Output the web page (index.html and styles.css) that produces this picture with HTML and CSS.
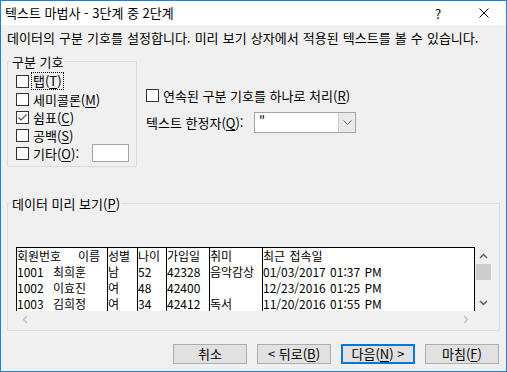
FILE: index.html
```html
<!DOCTYPE html>
<html lang="ko">
  <head>
    <meta charset="utf-8">
    <title>텍스트 마법사</title>
    <link rel="stylesheet" href="styles.css">
  </head>
  <body>
    <div class="window">
      <div class="titlebar">
        <span class="title">텍스트 마법사 - 3단계 중 2단계</span>
        <span class="tb-btn">?</span>
        <span class="tb-btn close">
          <svg width="10" height="10" viewBox="0 0 10 10"><path d="M0.5 0.5 L9.5 9.5 M9.5 0.5 L0.5 9.5" stroke="#000" stroke-width="1" fill="none"/></svg>
        </span>
      </div>

      <div class="content">
        <p class="intro">데이터의 구분 기호를 설정합니다. 미리 보기 상자에서 적용된 텍스트를 볼 수 있습니다.</p>

        <div class="options">
          <fieldset class="group delims">
            <legend>구분 기호</legend>
            <div class="delims-body">
              <div class="check"><span class="box"></span><span class="focus">탭(<u>T</u>)</span></div>
              <div class="check"><span class="box"></span><span>세미콜론(<u>M</u>)</span></div>
              <div class="check">
                <span class="box">
                  <svg width="11" height="11" viewBox="0 0 11 11"><path d="M1.5 5.5 L4 8 L9.5 2.5" fill="none" stroke="#555" stroke-width="1.2"/></svg>
                </span>
                <span>쉼표(<u>C</u>)</span>
              </div>
              <div class="check"><span class="box"></span><span>공백(<u>S</u>)</span></div>
              <div class="check"><span class="box"></span><span>기타(<u>O</u>):</span><span class="other-input"></span></div>
            </div>
          </fieldset>

          <div class="side">
            <div class="check"><span class="box"></span><span>연속된 구분 기호를 하나로 처리(<u>R</u>)</span></div>
            <div class="qualifier">
              <span class="qualifier-label">텍스트 한정자(<u>Q</u>):</span>
              <div class="combo">
                <span class="combo-value">"</span>
                <span class="combo-btn">
                  <svg width="9" height="5" viewBox="0 0 9 5"><path d="M0.5 0.5 L4.5 4.5 L8.5 0.5" fill="none" stroke="#606060" stroke-width="1"/></svg>
                </span>
              </div>
            </div>
          </div>
        </div>

        <fieldset class="group preview">
          <legend>데이터 미리 보기(<u>P</u>)</legend>
          <div class="preview-body">
            <div class="list">
              <div class="grid">
                <div class="col c1">
                  <div><span class="head-key">회원번호</span>이름</div>
                  <div><span class="key">1001</span>최희훈</div>
                  <div><span class="key">1002</span>이효진</div>
                  <div><span class="key">1003</span>김희정</div>
                </div>
                <div class="col c2">
                  <div>성별</div><div>남</div><div>여</div><div>여</div>
                </div>
                <div class="col c3">
                  <div>나이</div><div>52</div><div>48</div><div>34</div>
                </div>
                <div class="col c4">
                  <div>가입일</div><div>42328</div><div>42400</div><div>42412</div>
                </div>
                <div class="col c5">
                  <div>취미</div><div>음악감상</div><div>&nbsp;</div><div>독서</div>
                </div>
                <div class="col c6">
                  <div>최근 접속일</div>
                  <div>01/03/2017 01:37 PM</div>
                  <div>12/23/2016 01:25 PM</div>
                  <div>11/20/2016 01:55 PM</div>
                </div>
              </div>
              <div class="vscroll">
                <span class="sb-btn">
                  <svg width="9" height="6" viewBox="0 0 9 6"><path d="M1 5 L4.5 1.5 L8 5" fill="none" stroke="#606060" stroke-width="1.5"/></svg>
                </span>
                <div class="sb-track"><div class="sb-thumb"></div></div>
                <span class="sb-btn">
                  <svg width="9" height="6" viewBox="0 0 9 6"><path d="M1 1 L4.5 4.5 L8 1" fill="none" stroke="#606060" stroke-width="1.5"/></svg>
                </span>
              </div>
            </div>
            <div class="hscroll">
              <span class="sb-btn">
                <svg width="6" height="9" viewBox="0 0 6 9"><path d="M5 1 L1.5 4.5 L5 8" fill="none" stroke="#c2c2c2" stroke-width="1.5"/></svg>
              </span>
              <span class="sb-btn">
                <svg width="6" height="9" viewBox="0 0 6 9"><path d="M1 1 L4.5 4.5 L1 8" fill="none" stroke="#c2c2c2" stroke-width="1.5"/></svg>
              </span>
            </div>
          </div>
        </fieldset>

        <div class="buttons">
          <button class="btn">취소</button>
          <button class="btn">&lt; 뒤로(<u>B</u>)</button>
          <button class="btn default">다음(<u>N</u>) &gt;</button>
          <button class="btn">마침(<u>F</u>)</button>
        </div>
      </div>
    </div>
  </body>
</html>
```

FILE: styles.css
```css
* {
  box-sizing: border-box;
}

body {
  margin: 0;
  font-family: "Noto Sans CJK KR", "Noto Sans", sans-serif;
  font-size: 13px;
  color: #000;
  background-color: #f0f0f0;
}

u {
  text-decoration-thickness: 1px;
  text-underline-offset: 2px;
}

.window {
  width: 507px;
  height: 372px;
  border: 1px solid #1883d7;
  background-color: #f0f0f0;
  overflow: hidden;
}

/* title bar */
.titlebar {
  display: flex;
  align-items: center;
  height: 24px;
  background-color: #fff;
}

.title {
  flex: 1;
  padding-left: 4px;
  line-height: 24px;
  white-space: nowrap;
}

.tb-btn {
  width: 46px;
  height: 24px;
  display: flex;
  align-items: center;
  justify-content: center;
  font-size: 13px;
}

.tb-btn.close {
  width: 45px;
}

.content {
  padding: 0 6px;
}

.intro {
  margin: 5px 0 0;
  line-height: 16px;
  word-spacing: 0.5px;
  white-space: nowrap;
}

/* group boxes */
.group {
  margin: 0;
  padding: 0;
  border: 1px solid #dcdcdc;
  min-width: 0;
}

.group legend {
  margin-left: 3px;
  padding: 0 1px;
  line-height: 15px;
}

.options {
  display: flex;
  margin-top: 8px;
}

.delims {
  width: 130px;
  flex: none;
}

.delims-body {
  padding: 3px 7px 4px 8px;
}

.check {
  display: flex;
  align-items: center;
  gap: 4px;
  height: 18px;
  white-space: nowrap;
}

.box {
  width: 13px;
  height: 13px;
  flex: none;
  display: flex;
  border: 1px solid #333;
  background-color: #fff;
}

.focus {
  margin-left: -1px;
  padding: 0 1px;
  line-height: 16px;
  outline: 1px dotted #000;
}

.other-input {
  margin-left: auto;
  width: 37px;
  height: 18px;
  border: 1px solid #a5a5a5;
  background-color: #fff;
}

.side {
  margin-left: 9px;
  padding-top: 32px;
}

.qualifier {
  display: flex;
  align-items: center;
  margin-top: 8px;
}

.qualifier-label {
  width: 108px;
  white-space: nowrap;
}

.combo {
  display: flex;
  width: 102px;
  height: 21px;
  border: 1px solid #a5a5a5;
  background-color: #fff;
}

.combo-value {
  flex: 1;
  padding-left: 4px;
  line-height: 17px;
}

.combo-btn {
  width: 17px;
  display: flex;
  align-items: center;
  justify-content: center;
  border-left: 1px solid #cfcfcf;
  background-color: #e9e9e9;
}

/* preview */
.preview {
  margin-top: 29px;
}

.preview-body {
  padding: 36px 7px 2px 8px;
}

.list {
  display: flex;
  height: 64px;
  font-size: 12px;
}

.grid {
  flex: 1;
  display: flex;
  overflow: hidden;
  border: 1px solid #000;
  border-bottom: 0;
  background-color: #fff;
}

.col {
  flex: none;
  line-height: 16px;
  white-space: nowrap;
  overflow: hidden;
  border-left: 1px solid #000;
}

.c1 {
  width: 90px;
  border-left: 0;
}

.c2 { width: 30px; }
.c3 { width: 29px; }
.c4 { width: 43px; }
.c5 { width: 53px; }
.c6 { flex: 1; word-spacing: 1px; }

.head-key {
  display: inline-block;
  width: 61px;
}

.key {
  display: inline-block;
  width: 36px;
}

.vscroll {
  width: 17px;
  display: flex;
  flex-direction: column;
}

.sb-btn {
  width: 17px;
  height: 17px;
  flex: none;
  display: flex;
  align-items: center;
  justify-content: center;
}

.sb-track {
  flex: 1;
  padding: 0 1px;
}

.sb-thumb {
  height: 16px;
  background-color: #cdcdcd;
}

.hscroll {
  display: flex;
  justify-content: space-between;
  width: 458px;
  height: 17px;
}

/* buttons */
.buttons {
  display: flex;
  justify-content: flex-end;
  gap: 10px;
  margin-top: 13px;
  padding-right: 1px;
}

.btn {
  width: 74px;
  height: 20px;
  padding: 0;
  font: inherit;
  line-height: 18px;
  color: #000;
  text-align: center;
  border: 1px solid #adadad;
  background-color: #e1e1e1;
}

.btn.default {
  border: 2px solid #0078d7;
  line-height: 16px;
}
```
